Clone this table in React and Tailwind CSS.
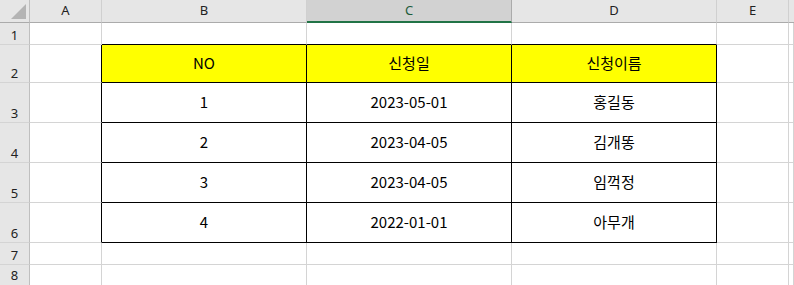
import React from 'react';

const rows = [
  { no: '1', date: '2023-05-01', name: '홍길동' },
  { no: '2', date: '2023-04-05', name: '김개똥' },
  { no: '3', date: '2023-04-05', name: '임꺽정' },
  { no: '4', date: '2022-01-01', name: '아무개' },
];

const cols = 'grid grid-cols-[30px_72px_205px_205px_205px_72px_1fr]';
const cellFont = { fontFamily: '"Noto Sans CJK KR", "Noto Sans", sans-serif' };
const headFont = { fontFamily: '"Noto Sans", "Liberation Sans", sans-serif' };

const RowHead = ({ n, h, pb = 'pb-[2px]' }) => (
  <div
    className={`${h} ${pb} bg-[#e6e6e6] border-r border-r-[#bfbfbf] border-b border-b-[#d4d4d4] flex items-end justify-center text-[13px] leading-none text-[#222]`}
    style={headFont}
  >
    {n}
  </div>
);

const Blank = ({ h }) => (
  <div className={`${h} border-r border-b border-[#d4d4d4]`} />
);

const App = () => {
  return (
    <div className="w-[794px] h-[285px] overflow-hidden bg-white text-black">
      {/* column headers */}
      <div className={cols} style={headFont}>
        <div className="h-[23px] bg-[#e6e6e6] border-r border-r-[#bfbfbf] border-b border-b-[#ababab] flex items-end justify-end p-[3px]">
          <div className="w-0 h-0 border-l-[15px] border-l-transparent border-b-[15px] border-b-[#b4b4b4]" />
        </div>
        {['A', 'B'].map((c) => (
          <div key={c} className="h-[23px] bg-[#e6e6e6] border-r border-r-[#d0d0d0] border-b border-b-[#ababab] flex items-center justify-center text-[13px] text-[#222]">
            {c}
          </div>
        ))}
        <div className="h-[23px] bg-[#d2d2d2] border-r border-r-[#ababab] border-b-2 border-b-[#217346] flex items-center justify-center text-[13px] text-[#1d5c3c]">
          C
        </div>
        {['D', 'E'].map((c) => (
          <div key={c} className="h-[23px] bg-[#e6e6e6] border-r border-r-[#d0d0d0] border-b border-b-[#ababab] flex items-center justify-center text-[13px] text-[#222]">
            {c}
          </div>
        ))}
        <div className="h-[23px] bg-[#e6e6e6] border-b border-b-[#ababab]" />
      </div>

      {/* row 1 */}
      <div className={cols}>
        <RowHead n="1" h="h-[22px]" />
        <Blank h="h-[22px]" />
        <div className="h-[22px] border-r border-r-[#d4d4d4] border-b border-b-black" />
        <div className="h-[22px] border-r border-r-[#d4d4d4] border-b border-b-black" />
        <div className="h-[22px] border-r border-r-[#d4d4d4] border-b border-b-black" />
        <Blank h="h-[22px]" />
        <Blank h="h-[22px]" />
      </div>

      {/* row 2: table header */}
      <div className={cols} style={cellFont}>
        <RowHead n="2" h="h-[38px]" />
        <div className="h-[38px] border-r border-r-black border-b border-b-[#d4d4d4]" />
        {['NO', '신청일', '신청이름'].map((t) => (
          <div key={t} className="h-[38px] bg-[#ffff00] border-r border-b border-black flex items-center justify-center text-[15px]">
            {t}
          </div>
        ))}
        <Blank h="h-[38px]" />
        <Blank h="h-[38px]" />
      </div>

      {/* rows 3-6: data */}
      {rows.map((r, i) => (
        <div key={r.no} className={cols} style={cellFont}>
          <RowHead n={String(i + 3)} h="h-[40px]" />
          <div className="h-[40px] border-r border-r-black border-b border-b-[#d4d4d4]" />
          {[r.no, r.date, r.name].map((t, j) => (
            <div key={j} className="h-[40px] border-r border-b border-black flex items-center justify-center text-[15px]">
              {t}
            </div>
          ))}
          <Blank h="h-[40px]" />
          <Blank h="h-[40px]" />
        </div>
      ))}

      {/* rows 7-8 */}
      {[['7', 'pb-[2px]'], ['8', 'pb-[4px]']].map(([n, pb]) => (
        <div key={n} className={cols}>
          <RowHead n={n} h="h-[22px]" pb={pb} />
          <Blank h="h-[22px]" />
          <Blank h="h-[22px]" />
          <Blank h="h-[22px]" />
          <Blank h="h-[22px]" />
          <Blank h="h-[22px]" />
          <Blank h="h-[22px]" />
        </div>
      ))}
    </div>
  );
};

export default App;
